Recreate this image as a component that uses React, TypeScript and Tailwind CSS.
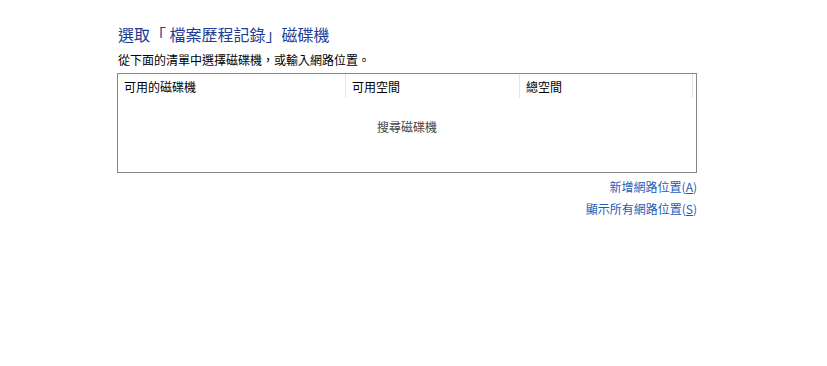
export default function App() {
  return (
    <div className="w-[827px] h-[366px] bg-white" style={{ fontFamily: '"Noto Sans CJK TC", "Noto Sans", sans-serif' }}>
      <div className="pl-[118px] pt-[24px] w-[697px]">
        <h1 className="text-[16px] leading-[20px] text-[#1e3c96]">選取「 檔案歷程記錄」磁碟機</h1>
        <p className="mt-[8px] text-[12px] leading-[16px] text-black">從下面的清單中選擇磁碟機，或輸入網路位置。</p>
        <div className="mt-[5px] -ml-px border border-[#828790] h-[100px] flex flex-col">
          <div className="flex h-[24px] text-[12px] text-black">
            <div className="w-[228px] pl-[6px] pt-[4px] border-r border-[#e5e5e5]">可用的磁碟機</div>
            <div className="w-[174px] pl-[6px] pt-[4px] border-r border-[#e5e5e5]">可用空間</div>
            <div className="w-[173px] pl-[6px] pt-[4px] border-r border-[#e5e5e5]">總空間</div>
          </div>
          <div className="flex-1 flex justify-center pt-[20px] text-[12px] text-[#444]">
            <span>搜尋磁碟機</span>
          </div>
        </div>
        <div className="mt-[6px] flex flex-col items-end gap-[6px] text-[12px] leading-[16px] text-[#1a5eb8]">
          <a href="#">新增網路位置(<span className="underline">A</span>)</a>
          <a href="#">顯示所有網路位置(<span className="underline">S</span>)</a>
        </div>
      </div>
    </div>
  );
}
